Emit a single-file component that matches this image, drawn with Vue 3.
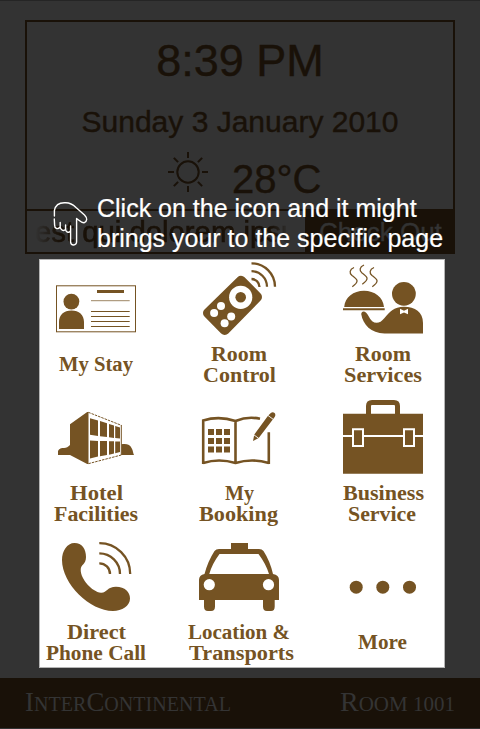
<script setup>
const labels = {
  stay: [{ t: 'My Stay', x: 59, y: 371, w: 74 }],
  control: [{ t: 'Room', x: 211, y: 361, w: 56 }, { t: 'Control', x: 203, y: 382, w: 73 }],
  services: [{ t: 'Room', x: 355, y: 361, w: 56 }, { t: 'Services', x: 344, y: 382, w: 78 }],
  hotel: [{ t: 'Hotel', x: 70, y: 500, w: 53 }, { t: 'Facilities', x: 54, y: 521, w: 84 }],
  booking: [{ t: 'My', x: 225, y: 500, w: 29 }, { t: 'Booking', x: 199, y: 521, w: 79 }],
  business: [{ t: 'Business', x: 343, y: 500, w: 81 }, { t: 'Service', x: 348, y: 521, w: 68 }],
  phone: [{ t: 'Direct', x: 67, y: 639, w: 59 }, { t: 'Phone Call', x: 46, y: 660, w: 100 }],
  taxi: [{ t: 'Location &', x: 188, y: 639, w: 102 }, { t: 'Transports', x: 189, y: 660, w: 105 }],
  more: [{ t: 'More', x: 358, y: 649, w: 49 }],
}
const rays = [0, 45, 90, 135, 180, 225, 270, 315]
</script>

<template>
  <div class="screen">
    <header class="card">
      <div class="info">
        <div class="time">8:39 PM</div>
        <div class="date">Sunday 3 January 2010</div>
        <div class="weather">
          <svg class="sun" width="42" height="42" viewBox="-21 -21 42 42">
            <circle r="10.7" />
            <path v-for="r in rays" :key="r" d="M14 0H20" :transform="`rotate(${r})`" />
          </svg>
          <span class="temp">28°C</span>
        </div>
      </div>
      <div class="bar">
        <div class="ticker"><span>est qui dolorem ipsu</span></div>
        <div class="checkout">Check Out</div>
      </div>
    </header>

    <footer class="footer">
      <svg width="480" height="50" viewBox="0 678 480 50">
        <text x="25" y="711" textLength="206" lengthAdjust="spacingAndGlyphs"><tspan class="big">I</tspan>NTER<tspan class="big">C</tspan>ONTINENTAL</text>
        <text x="340" y="711" textLength="115" lengthAdjust="spacingAndGlyphs"><tspan class="big">R</tspan>OOM 1001</text>
      </svg>
    </footer>

    <div class="hint">
      <svg class="hand" width="36" height="48" viewBox="52 200 36 48">
        <path d="M54.4 216V210.5C55.5 205 60 202.6 65 202.8C70 202.5 73 204.5 76 207.5L84.5 215C87.5 218 87.5 221.5 84 222.8C81.5 223 79.5 220.5 76.6 218.5V241.5C76.8 246 70.8 246 70.6 242V230.5C69.5 233.5 66 232.5 65.6 229.5C63.5 231.5 60.5 230 60.2 227C57.5 230 54.5 228.5 54.6 225L54.3 219M60.2 222.5V227M65.6 225V230M70.6 226V232" />
      </svg>
      <p class="hint-text">Click on the icon and it might<br>brings your to the specific page</p>
    </div>

    <main class="panel">
      <div class="grid">
        <svg class="tile" width="144" height="139" viewBox="24 259 144 139">
          <rect class="line" x="56.5" y="285.8" width="79" height="46" />
          <circle cx="71.4" cy="301.6" r="7.9" />
          <path d="M59 329V322C59 315 64 310.6 71.5 310.6S84 315 84 322V329ZM97 290H124V293H97Z" />
          <path class="line" d="M91 311.5H129.7M91 316.5H129.7M91 321.5H129.7M91 326.5H129.7" />
          <path class="line faint" d="M91 300.7H129.7" />
          <text v-for="l in labels.stay" :key="l.t" :x="l.x" :y="l.y" :textLength="l.w" lengthAdjust="spacingAndGlyphs">{{ l.t }}</text>
        </svg>

        <svg class="tile" width="143" height="139" viewBox="168 259 143 139">
          <path class="joined" d="M241 280.7L257 297L224.7 330L208 313Z" />
          <circle class="white" cx="240.7" cy="297.3" r="11.6" />
          <circle cx="240.7" cy="297.3" r="5.3" />
          <g class="white">
            <circle cx="221" cy="306" r="4" /><circle cx="214.1" cy="313" r="4" />
            <circle cx="231.2" cy="316.5" r="4" /><circle cx="224.6" cy="323.3" r="4" />
          </g>
          <path class="wave" d="M251.5 279A8 8 0 0 1 259.5 287M251.5 271.2A15.6 15.6 0 0 1 267 286.7M251.5 263.3A23.5 23.5 0 0 1 275 286.7" />
          <text v-for="l in labels.control" :key="l.t" :x="l.x" :y="l.y" :textLength="l.w" lengthAdjust="spacingAndGlyphs">{{ l.t }}</text>
        </svg>

        <svg class="tile" width="144" height="139" viewBox="311 259 144 139">
          <circle cx="403.9" cy="293.8" r="11.9" />
          <path d="M384.5 333.4H423V323C423 312 415 306.8 404 306.8C394 306.8 389 312.5 384.5 318C379 325 372.5 324.5 368.5 316C366.5 311.5 362 309.5 361.2 314C363 325 371 333 384.5 333.4Z" />
          <path class="white" d="M400 308.7L404 310.7L408 308.7V314.2L404 312.4L400 314.2Z" />
          <path d="M344.2 307C345 297 353.5 290.7 364 290.7S383.2 297 384 307ZM343 308.3H384.7V310.2H343Z" />
          <g class="steam">
            <path d="M354 267.5C349.5 269.5 349 273 352 275.5C356.5 279 360.5 281 352.3 286.7" />
            <path d="M364 265C359.5 267 359 270.5 362 273C366.5 276.5 370.5 278.5 362.3 284.2" />
            <path d="M374 267.5C369.5 269.5 369 273 372 275.5C376.5 279 380.5 281 372.3 286.7" />
          </g>
          <text v-for="l in labels.services" :key="l.t" :x="l.x" :y="l.y" :textLength="l.w" lengthAdjust="spacingAndGlyphs">{{ l.t }}</text>
        </svg>

        <svg class="tile" width="144" height="139" viewBox="24 398 144 139">
          <path d="M58 455V451C59 448.5 61.5 448 64 448C66.5 448 68 447 70 445V424.3L87.2 412H88.5V464H87.2L70 455ZM121.5 444.3C126 443.3 130.5 444.5 131.8 448.5C133 450.5 133 453 134 455H121.5Z" />
          <path class="line dash" d="M88.3 412.3L121.3 425.3M121.3 455L88.3 463.7" />
          <path class="line" d="M121.3 425V455" />
          <path d="M90 418.2L98 420.6V436L90 434.8ZM100 421L107 423.2V437L100 436.2ZM109 424L114 425.5V438L109 437.2ZM115.2 426L120 427.5V438.5L115.2 438ZM90 440.5L98 441V456.5L90 458.5ZM100 441H107V455L100 456.3ZM109 441.3H114V453.5L109 454.7ZM115.2 441.4H120V452L115.2 453.2Z" />
          <text v-for="l in labels.hotel" :key="l.t" :x="l.x" :y="l.y" :textLength="l.w" lengthAdjust="spacingAndGlyphs">{{ l.t }}</text>
        </svg>

        <svg class="tile" width="143" height="139" viewBox="168 398 143 139">
          <path class="book" d="M203.2 464V420.5Q219 415.5 235.5 421Q248 416 260 418.8M203.2 463Q219 458 235.5 463Q252 458 268.8 463M235.5 421V463M268.8 432.3V464" />
          <path d="M208 429h6v6h-6zM216 429h6v6h-6zM224 429h6v6h-6zM208 438h6v6h-6zM216 438h6v6h-6zM224 438h6v6h-6zM208 446.5h6v6h-6zM216 446.5h6v6h-6zM224 446.5h6v6h-6z" />
          <path d="M253 441L254.3 434.5L268.2 415.5L270.8 413C273.5 411 277 414 274.5 417.2L258.7 438Z" />
          <path class="cut" d="M253.8 434.8L258.8 438.4M267.8 415.3L273 419.2" />
          <text v-for="l in labels.booking" :key="l.t" :x="l.x" :y="l.y" :textLength="l.w" lengthAdjust="spacingAndGlyphs">{{ l.t }}</text>
        </svg>

        <svg class="tile" width="144" height="139" viewBox="311 398 144 139">
          <path class="handle" d="M368.5 415V406Q368.5 402.5 372 402.5H394Q397.5 402.5 397.5 406V415" />
          <path d="M343 413.7H423V473.7H343Z" />
          <path class="white" d="M343 435H423V437H343Z" />
          <path class="clasp" d="M353 429.2H363V446H353ZM404 429.2H414V446H404Z" />
          <text v-for="l in labels.business" :key="l.t" :x="l.x" :y="l.y" :textLength="l.w" lengthAdjust="spacingAndGlyphs">{{ l.t }}</text>
        </svg>

        <svg class="tile" width="144" height="139" viewBox="24 537 144 139">
          <path d="M62 560C62 551 67 543 74.5 543C82 543 86 549 86 557C86 565 80.7 564 80.7 570C80.7 579 92 592 101 592.7C107 593 107 586.8 116 586.8C125 586.8 130 592 130 598.5C130 606 122 611 113 611C90 611 62 584 62 560Z" />
          <path class="wave" d="M99.3 563.3A10.6 10.6 0 0 1 110 574M99.3 553.3A20.7 20.7 0 0 1 120 574M99.3 543.2A30.8 30.8 0 0 1 130.2 574" />
          <text v-for="l in labels.phone" :key="l.t" :x="l.x" :y="l.y" :textLength="l.w" lengthAdjust="spacingAndGlyphs">{{ l.t }}</text>
        </svg>

        <svg class="tile" width="143" height="139" viewBox="168 537 143 139">
          <path fill-rule="evenodd" d="M231 543H248V549H259Q262 549 263.5 551Q270 561 273 574Q279 575 279 580V600H274.7V606.5Q274.7 611 271 611H267Q263 611 263 606.5V600H215V606.5Q215 611 211 611H208Q204 611 204 606.5V600H199V580Q199 575 204.5 574Q208 561 214.5 551Q216 549 219 549H231ZM219.5 554Q212 564 209.3 574H269Q266 564 258.5 554Z" />
          <circle class="white" cx="209.3" cy="584.7" r="5.6" />
          <circle class="white" cx="268.5" cy="584.7" r="5.6" />
          <text v-for="l in labels.taxi" :key="l.t" :x="l.x" :y="l.y" :textLength="l.w" lengthAdjust="spacingAndGlyphs">{{ l.t }}</text>
        </svg>

        <svg class="tile" width="144" height="139" viewBox="311 537 144 139">
          <circle cx="356.2" cy="587.2" r="6.5" /><circle cx="382.8" cy="587.2" r="6.5" /><circle cx="409.5" cy="587.2" r="6.5" />
          <text v-for="l in labels.more" :key="l.t" :x="l.x" :y="l.y" :textLength="l.w" lengthAdjust="spacingAndGlyphs">{{ l.t }}</text>
        </svg>
      </div>
    </main>
  </div>
</template>

<style>
body { margin: 0; background: #333; }
</style>

<style scoped>
.screen {
  position: relative;
  box-sizing: border-box;
  width: 480px;
  height: 729px;
  padding-top: 19px;
  border-top: 1px solid #252525;
  background: #333;
  color: #191108;
  font-family: "Liberation Sans", Arial, sans-serif;
  display: flex;
  flex-direction: column;
  overflow: hidden;
}
.card {
  box-sizing: border-box;
  width: 430px;
  height: 234px;
  margin: 0 25px;
  border: 2px solid #191108;
  display: flex;
  flex-direction: column;
  flex: none;
}
.info { height: 187px; text-align: center; white-space: nowrap; -webkit-text-stroke: 0.4px #191108; }
.time { padding-top: 13px; font-size: 45px; line-height: 52px; }
.date { padding-top: 17px; font-size: 30px; line-height: 36px; }
.weather { display: flex; padding: 11px 0 0 140px; }
.sun { fill: none; stroke: #191108; stroke-width: 2; }
.temp { margin: 5px 0 0 23px; font-size: 40px; line-height: 46px; }
.bar { display: flex; height: 43px; }
.ticker {
  box-sizing: border-box;
  width: 278px;
  padding-left: 8px;
  border-top: 2px solid #191108;
  white-space: nowrap;
  font-size: 29.3px;
  line-height: 42px;
  -webkit-text-stroke: 0.6px #191108;
}
.ticker span {
  display: block;
  width: 264px;
  mask-image: linear-gradient(90deg, transparent, #000 24px, #000 236px, transparent 256px);
}
.checkout {
  flex: 1;
  padding-left: 14px;
  background: #191108;
  color: #333;
  font-size: 26px;
  line-height: 46px;
  white-space: nowrap;
  -webkit-text-stroke: 0.4px #333;
}
.footer { height: 50px; margin-top: auto; margin-bottom: 1px; background: #191108; flex: none; }
.footer svg { display: block; fill: #343434; font-family: "Liberation Serif", serif; font-size: 21px; }
.footer .big { font-size: 28px; }
.hint { position: absolute; left: 52px; top: 192px; display: flex; color: #fff; }
.hand { margin-top: 7px; fill: none; stroke: #fff; stroke-width: 1.4; stroke-linejoin: round; stroke-linecap: round; }
.hint-text { margin: 0 0 0 9px; font-size: 25px; line-height: 30px; white-space: nowrap; -webkit-text-stroke: 0.2px #fff; }
.panel {
  position: absolute;
  left: 39px;
  top: 258px;
  box-sizing: border-box;
  width: 406px;
  height: 409px;
  border: 1px solid #b5b5b5;
  background: #fff;
}
.grid { display: grid; grid-template-columns: 144px 143px 144px; grid-auto-rows: 139px; margin: -1px 0 0 -16px; width: 431px; }
.tile { display: block; fill: #755323; }
.tile text { font: bold 20px "Liberation Serif", serif; }
.line { fill: none; stroke: #755323; stroke-width: 1; }
.faint { opacity: 0.7; }
.dash { stroke-dasharray: 2.5 1; }
.joined { stroke: #755323; stroke-width: 10; stroke-linejoin: round; }
.white { fill: #fff; }
.wave { fill: none; stroke: #755323; stroke-width: 2.3; }
.steam { fill: none; stroke: #755323; stroke-width: 1.3; }
.book { fill: none; stroke: #755323; stroke-width: 2.6; }
.cut { fill: none; stroke: #fff; stroke-width: 0.9; }
.handle { fill: none; stroke: #755323; stroke-width: 5; }
.clasp { stroke: #fff; stroke-width: 2; }
</style>
